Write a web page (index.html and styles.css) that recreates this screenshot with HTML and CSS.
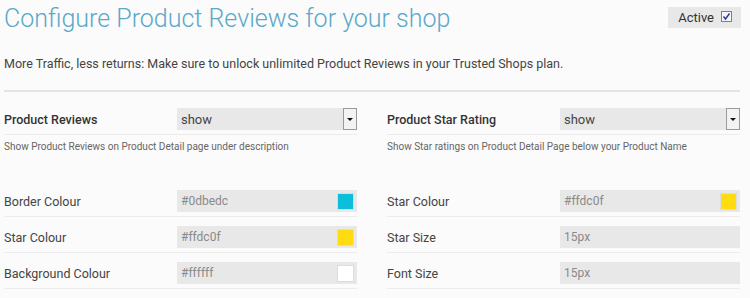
FILE: index.html
```html
<!DOCTYPE html>
<html lang="en">
<head>
<meta charset="UTF-8">
<meta name="viewport" content="width=device-width, initial-scale=1.0">
<title>Product Reviews</title>
<link rel="stylesheet" href="styles.css">
</head>
<body>
  <div class="page">
    <!-- Header -->
    <div class="header">
      <h1 class="title">Configure Product Reviews for your shop</h1>
      <label class="active-box">
        Active
        <span class="checkbox">
          <svg width="11" height="11" viewBox="0 0 11 11">
            <rect x="0.5" y="0.5" width="10" height="10" fill="#f4f4f8" stroke="#7a7f99"/>
            <path d="M2.5 5.5 L4.5 8 L8.5 2.5" fill="none" stroke="#2c3a8c" stroke-width="1.4"/>
          </svg>
        </span>
      </label>
    </div>
    <p class="intro">More Traffic, less returns: Make sure to unlock unlimited Product Reviews in your Trusted Shops plan.</p>
    <div class="divider"></div>

    <div class="columns">
      <!-- Left column -->
      <div class="column">
        <div class="row">
          <span class="label strong">Product Reviews</span>
          <div class="field select">
            <span>show</span>
            <span class="arrow"></span>
          </div>
        </div>
        <p class="hint">Show Product Reviews on Product Detail page under description</p>

        <div class="row">
          <span class="label">Border Colour</span>
          <div class="field">
            <span class="value">#0dbedc</span>
            <span class="swatch swatch-blue"></span>
          </div>
        </div>
        <div class="row">
          <span class="label">Star Colour</span>
          <div class="field">
            <span class="value">#ffdc0f</span>
            <span class="swatch swatch-yellow"></span>
          </div>
        </div>
        <div class="row">
          <span class="label">Background Colour</span>
          <div class="field">
            <span class="value">#ffffff</span>
            <span class="swatch swatch-white"></span>
          </div>
        </div>
      </div>

      <!-- Right column -->
      <div class="column">
        <div class="row">
          <span class="label strong">Product Star Rating</span>
          <div class="field select">
            <span>show</span>
            <span class="arrow"></span>
          </div>
        </div>
        <p class="hint">Show Star ratings on Product Detail Page below your Product Name</p>

        <div class="row">
          <span class="label">Star Colour</span>
          <div class="field">
            <span class="value">#ffdc0f</span>
            <span class="swatch swatch-yellow"></span>
          </div>
        </div>
        <div class="row">
          <span class="label">Star Size</span>
          <div class="field">
            <span class="value">15px</span>
          </div>
        </div>
        <div class="row">
          <span class="label">Font Size</span>
          <div class="field">
            <span class="value">15px</span>
          </div>
        </div>
      </div>
    </div>
  </div>
</body>
</html>
```

FILE: styles.css
```css
body {
  font-family: Roboto, "Liberation Sans", Arial, sans-serif;
  margin: 0;
  background-color: #fbfbfb;
  color: #444;
}

.page {
  padding: 0 10px 0 4px;
}

.header {
  display: flex;
  justify-content: space-between;
  align-items: flex-start;
}

.title {
  margin: 0;
  padding-top: 3px;
  font-size: 25px;
  font-weight: 300;
  color: #5aa8ca;
  line-height: 32px;
}

.active-box {
  display: flex;
  align-items: center;
  gap: 7px;
  margin-top: 7px;
  margin-right: -1px;
  height: 21px;
  padding: 0 9px 0 10px;
  background-color: #e8e8e8;
  font-size: 13px;
  color: #333;
}

.checkbox {
  display: flex;
  margin-top: -2px;
}

.intro {
  margin: 19px 0 0;
  font-size: 12.5px;
  line-height: 20px;
  color: #444;
}

.divider {
  margin-top: 16px;
  height: 2px;
  background-color: #e4e4e4;
}

.columns {
  display: flex;
  gap: 30px;
  margin-top: 16px;
}

.column {
  flex: 1;
}

.row {
  display: flex;
  align-items: center;
  padding-bottom: 4px;
  margin-bottom: 9px;
  border-bottom: 1px solid #ececec;
}

.label {
  width: 173px;
  font-size: 12.5px;
  color: #444;
}

.label.strong {
  font-weight: 500;
  color: #333;
}

.field {
  flex: 1;
  display: flex;
  align-items: center;
  justify-content: space-between;
  height: 22px;
  padding-left: 4px;
  padding-right: 3px;
  background-color: #e8e8e8;
  font-size: 12px;
}

.value {
  color: #8a8a8a;
}

.select {
  padding-right: 0;
  font-size: 13px;
  color: #444;
}

.arrow {
  position: relative;
  width: 12px;
  height: 20px;
  border: 1px solid #9a9a9a;
  background-color: #f3f3f3;
}

.arrow::after {
  content: "";
  position: absolute;
  left: 3px;
  top: 9px;
  border-left: 3px solid transparent;
  border-right: 3px solid transparent;
  border-top: 3px solid #111;
}

.swatch {
  width: 15px;
  height: 15px;
  border: 1px solid #dcdcdc;
}

.swatch-blue {
  background-color: #0dbedc;
}

.swatch-yellow {
  background-color: #ffdc0f;
}

.swatch-white {
  background-color: #ffffff;
}

.hint {
  margin: -4px 0 36px;
  font-size: 10px;
  line-height: 14px;
  color: #666;
}
```
